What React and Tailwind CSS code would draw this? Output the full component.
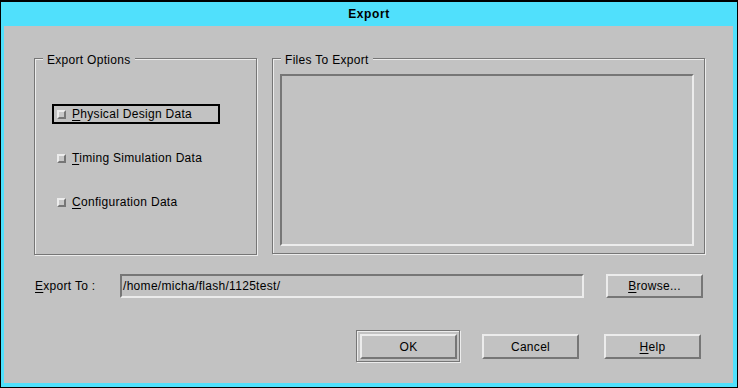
import React from "react";

const raised =
  "border-2 border-t-[#ececec] border-l-[#ececec] border-b-[#767676] border-r-[#767676]";
const sunken =
  "border-2 border-t-[#767676] border-l-[#767676] border-b-[#ececec] border-r-[#ececec]";
const etched =
  "border border-[#767676] shadow-[inset_1px_1px_0_#ececec,1px_1px_0_#ececec]";

function Mnemonic({ first, rest }) {
  return (
    <span>
      <span className="underline underline-offset-2">{first}</span>
      {rest}
    </span>
  );
}

function Button({ children, className = "" }) {
  return (
    <div
      className={`${raised} w-[97px] flex items-center justify-center bg-[#c2c2c2] ${className}`}
    >
      {children}
    </div>
  );
}

function Option({ first, rest, focused }) {
  return (
    <div
      className={`h-[20px] w-[168px] flex items-center pl-[3px] border-2 ${
        focused ? "border-black" : "border-transparent"
      }`}
    >
      <div className={`${raised} w-[9px] h-[9px] bg-[#c8c8c8]`} />
      <div className="ml-[6px]">
        <Mnemonic first={first} rest={rest} />
      </div>
    </div>
  );
}

function GroupBox({ title, className = "", children }) {
  return (
    <div className={`relative ${etched} ${className}`}>
      <div className="absolute -top-[6px] left-[8px] px-[4px] bg-[#c2c2c2] leading-[14px]">
        {title}
      </div>
      {children}
    </div>
  );
}

export default function App() {
  return (
    <div
      className="w-[738px] h-[388px] bg-black pt-[2px] px-px pb-px flex text-[12px] tracking-[0.3px] text-black"
      style={{ fontFamily: '"Liberation Sans", Arial, sans-serif' }}
    >
      <div className="flex-1 flex flex-col bg-[#50e0fc] pl-[3px] pr-[4px] pb-[4px]">
        {/* Title bar */}
        <div className="h-[24px] -ml-[3px] -mr-[4px] flex items-center justify-center font-bold text-[12px] tracking-[0.6px]">
          Export
        </div>

        {/* Dialog body */}
        <div className="flex-1 bg-[#c2c2c2] flex flex-col pl-[30px] pt-[32px]">
          <div className="flex gap-[15px]">
            <GroupBox title="Export Options" className="w-[223px] h-[197px] pl-[17px] pt-[45px]">
              <div className="flex flex-col gap-[24px]">
                <Option first="P" rest="hysical Design Data" focused />
                <Option first="T" rest="iming Simulation Data" />
                <Option first="C" rest="onfiguration Data" />
              </div>
            </GroupBox>

            <GroupBox title="Files To Export" className="w-[433px] h-[196px] pl-[7px] pt-[15px]">
              <div className={`${sunken} w-[414px] h-[172px]`} />
            </GroupBox>
          </div>

          <div className="mt-[19px] flex items-center">
            <div className="w-[86px] pl-px">
              <Mnemonic first="E" rest="xport To :" />
            </div>
            <div className={`${sunken} w-[464px] h-[24px] flex items-center pl-px`}>
              /home/micha/flash/1125test/
            </div>
            <Button className="ml-[22px] h-[24px]">
              <Mnemonic first="B" rest="rowse..." />
            </Button>
          </div>

          <div className="mt-[32px] flex items-start ml-[322px]">
            <div className={`${etched} w-[104px] h-[32px] pl-[3px] pt-[3px]`}>
              <Button className="h-[25px]">OK</Button>
            </div>
            <Button className="ml-[22px] mt-[4px] h-[25px]">Cancel</Button>
            <Button className="ml-[25px] mt-[4px] h-[25px]">
              <Mnemonic first="H" rest="elp" />
            </Button>
          </div>
        </div>
      </div>
    </div>
  );
}
